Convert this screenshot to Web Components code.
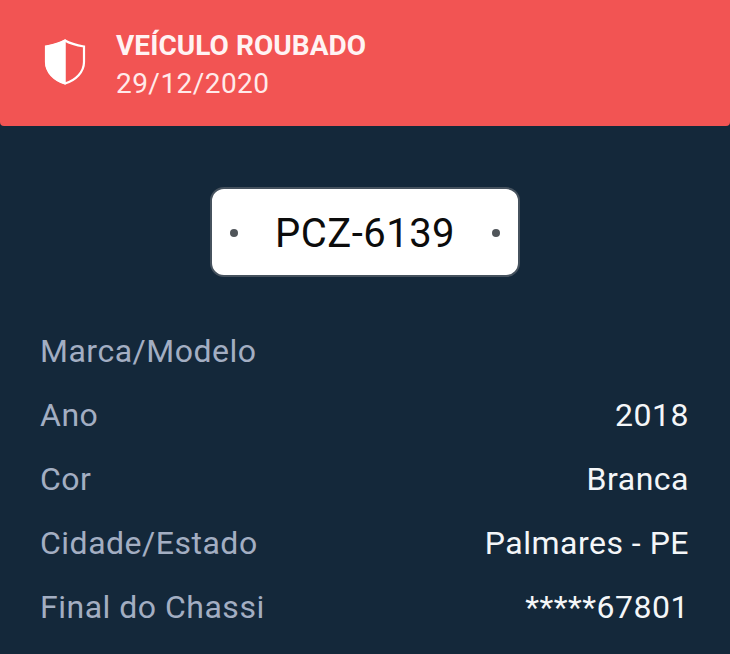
<!DOCTYPE html>
<html><head><meta charset="utf-8"><style>
html,body{margin:0;padding:0;background:#14283a;height:654px;overflow:hidden}
body{font-family:Roboto,sans-serif}
</style></head><body>
<vehicle-card>
<alert-banner title-text="VEÍCULO ROUBADO" date="29/12/2020"></alert-banner>
<license-plate>PCZ-6139</license-plate>
<info-list>
<info-row label="Marca/Modelo"></info-row>
<info-row label="Ano">2018</info-row>
<info-row label="Cor">Branca</info-row>
<info-row label="Cidade/Estado">Palmares - PE</info-row>
<info-row label="Final do Chassi">*****67801</info-row>
</info-list>
</vehicle-card>
<script>
function def(name,html,init){customElements.define(name,class extends HTMLElement{constructor(){super();this.attachShadow({mode:'open'}).innerHTML=html}connectedCallback(){init&&init(this)}})}
def('vehicle-card','<style>:host{display:block;width:730px;height:654px;background:#14283a;font-family:Roboto,sans-serif}</style><slot></slot>');
def('alert-banner',`<style>:host{display:flex;align-items:center;box-sizing:border-box;height:126px;background:#f25453;border-radius:0 0 4px 4px;padding-left:44px;color:#fff}
svg{width:42px;height:46px;flex:none;margin-right:30px;margin-top:-2px}
.t{font-size:28px;font-weight:700;line-height:38px;letter-spacing:.05px;color:#fff3f3}
.d{font-size:28px;line-height:38px;letter-spacing:.45px;color:#ffeaea}
.b{margin-top:4px}</style>
<svg viewBox="0 0 42 46"><path d="M21 1.500C16 4.500 8 6.500 2 7.500V23C2 33 10 41 21 44.500 32 41 40 33 40 23V7.500C34 6.500 26 4.500 21 1.500Z" fill="none" stroke="#fff" stroke-width="2.200"/><path d="M21 1.500C16 4.500 8 6.500 2 7.500V23C2 33 10 41 21 44.500Z" fill="#fff" stroke="#fff" stroke-width="1.500"/></svg>
<div class="b"><div class="t"></div><div class="d"></div></div>`,el=>{el.shadowRoot.querySelector('.t').textContent=el.getAttribute('title-text');el.shadowRoot.querySelector('.d').textContent=el.getAttribute('date')});
def('license-plate',`<style>:host{display:flex;justify-content:center;padding-top:61px}
.p{box-sizing:border-box;width:310px;height:90px;background:#fff;border:2px solid #46525e;border-radius:14px;display:flex;align-items:center;justify-content:space-between;padding:0 18px;color:#0c0c0c;font-size:40px;letter-spacing:.5px}
i{width:8px;height:8px;border-radius:50%;background:#50555a;display:block;position:relative;top:1px}
span{position:relative;top:1px}</style>
<div class="p"><i></i><span><slot></slot></span><i></i></div>`);
def('info-list',`<style>:host{display:flex;flex-direction:column;gap:0;padding:42px 41px 0 40px}</style><slot></slot>`);
def('info-row',`<style>:host{display:flex;justify-content:space-between;align-items:center;height:64px;font-size:32px}
.l{color:#a3aec2;letter-spacing:.5px}.v{color:#f4f6f8;letter-spacing:.5px}</style><span class="l"></span><span class="v"><slot></slot></span>`,el=>{el.shadowRoot.querySelector('.l').textContent=el.getAttribute('label')});
</script>
</body></html>
